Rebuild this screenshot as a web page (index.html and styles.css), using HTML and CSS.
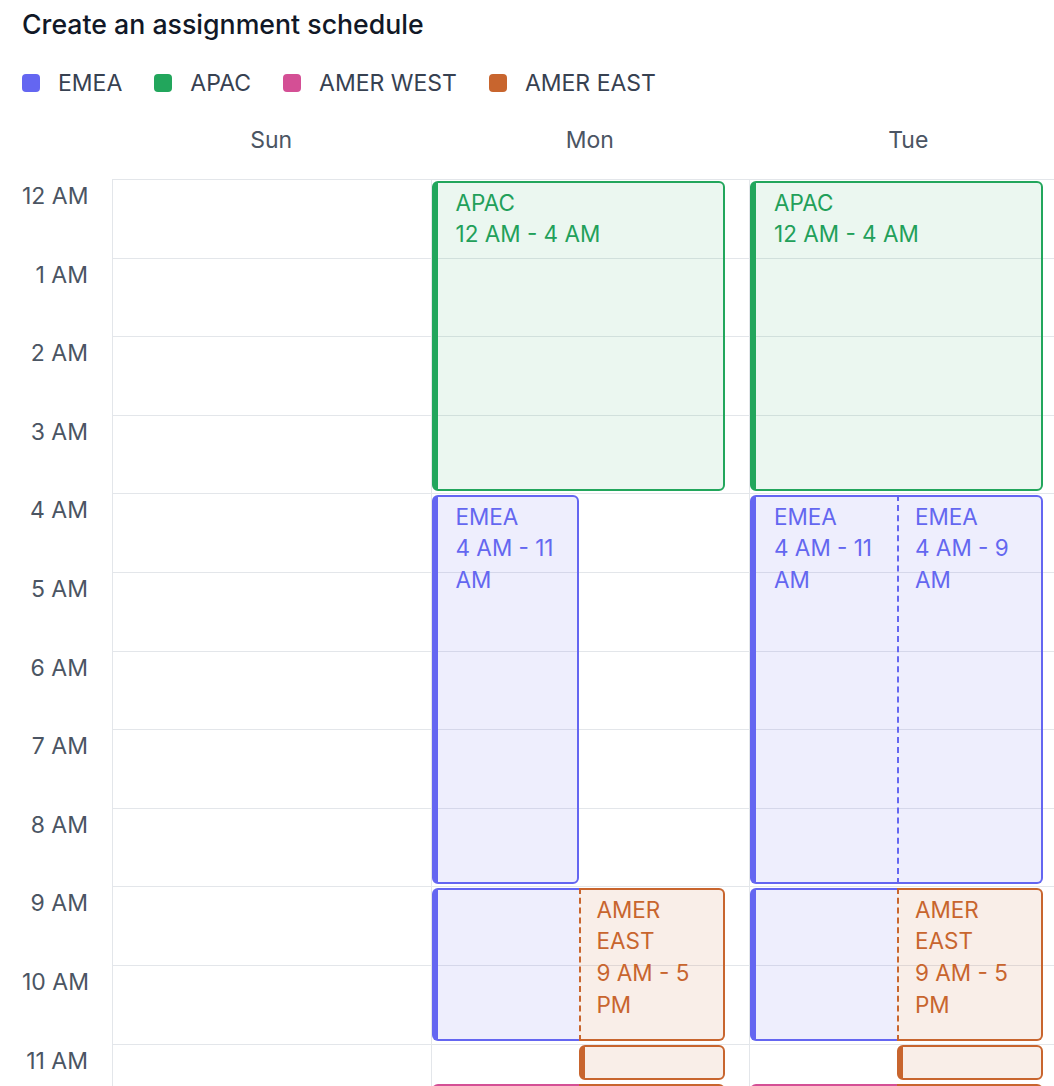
FILE: index.html
```html
<!DOCTYPE html>
<html lang="en">
<head>
<meta charset="utf-8">
<title>Create an assignment schedule</title>
<link rel="stylesheet" href="styles.css">
</head>
<body>
<div class="page">
  <h1 class="title">Create an assignment schedule</h1>
  <ul class="legend">
    <li><span class="sw emea"></span>EMEA</li>
    <li><span class="sw apac"></span>APAC</li>
    <li><span class="sw west"></span>AMER WEST</li>
    <li><span class="sw east"></span>AMER EAST</li>
  </ul>
  <div class="cal-head">
    <div class="gutter"></div>
    <div class="day-name">Sun</div>
    <div class="day-name">Mon</div>
    <div class="day-name">Tue</div>
  </div>
  <div class="cal-body">
    <div class="times">
      <div class="time">12 AM</div>
      <div class="time">1 AM</div>
      <div class="time">2 AM</div>
      <div class="time">3 AM</div>
      <div class="time">4 AM</div>
      <div class="time">5 AM</div>
      <div class="time">6 AM</div>
      <div class="time">7 AM</div>
      <div class="time">8 AM</div>
      <div class="time">9 AM</div>
      <div class="time">10 AM</div>
      <div class="time">11 AM</div>
    </div>
    <div class="grid">
      <div class="day">
        <div class="cell"></div><div class="cell"></div><div class="cell"></div><div class="cell"></div>
        <div class="cell"></div><div class="cell"></div><div class="cell"></div><div class="cell"></div>
        <div class="cell"></div><div class="cell"></div><div class="cell"></div><div class="cell"></div>
      </div>
      <div class="day">
        <div class="cell"></div><div class="cell"></div><div class="cell"></div><div class="cell"></div>
        <div class="cell"></div><div class="cell"></div><div class="cell"></div><div class="cell"></div>
        <div class="cell"></div><div class="cell"></div><div class="cell"></div><div class="cell"></div>
        <div class="slot" style="--s:0;--d:4">
          <div class="seg whole apac first last"><div>APAC</div><div>12 AM - 4 AM</div></div>
        </div>
        <div class="slot" style="--s:4;--d:5">
          <div class="seg half emea first last"><div>EMEA</div><div>4 AM - 11 AM</div></div>
        </div>
        <div class="slot" style="--s:9;--d:2">
          <div class="seg half emea first"></div>
          <div class="seg rest east last split"><div>AMER EAST</div><div>9 AM - 5 PM</div></div>
        </div>
        <div class="slot" style="--s:11;--d:0.5">
          <div class="gap"></div>
          <div class="seg rest east first last"></div>
        </div>
        <div class="slot" style="--s:11.5;--d:2">
          <div class="seg half west first"></div>
          <div class="seg rest east last split"></div>
        </div>
      </div>
      <div class="day">
        <div class="cell"></div><div class="cell"></div><div class="cell"></div><div class="cell"></div>
        <div class="cell"></div><div class="cell"></div><div class="cell"></div><div class="cell"></div>
        <div class="cell"></div><div class="cell"></div><div class="cell"></div><div class="cell"></div>
        <div class="slot" style="--s:0;--d:4">
          <div class="seg whole apac first last"><div>APAC</div><div>12 AM - 4 AM</div></div>
        </div>
        <div class="slot" style="--s:4;--d:5">
          <div class="seg half emea first"><div>EMEA</div><div>4 AM - 11 AM</div></div>
          <div class="seg rest emea last split"><div>EMEA</div><div>4 AM - 9 AM</div></div>
        </div>
        <div class="slot" style="--s:9;--d:2">
          <div class="seg half emea first"></div>
          <div class="seg rest east last split"><div>AMER EAST</div><div>9 AM - 5 PM</div></div>
        </div>
        <div class="slot" style="--s:11;--d:0.5">
          <div class="gap"></div>
          <div class="seg rest east first last"></div>
        </div>
        <div class="slot" style="--s:11.5;--d:2">
          <div class="seg half west first"></div>
          <div class="seg rest east last split"></div>
        </div>
      </div>
    </div>
  </div>
</div>
</body>
</html>
```
FILE: styles.css
```css
* { box-sizing: border-box; }
html, body { margin: 0; padding: 0; background: #fff; overflow: hidden; }
body { font-family: Inter, "Noto Sans", sans-serif; color: #374151; }

.page { width: 1054px; height: 1086px; overflow: hidden; padding: 10px 0 0 22px; }

.title { margin: 0; font-size: 26.7px; line-height: 28px; font-weight: 500; color: #111827; }

.legend { list-style: none; margin: 35px 0 0; padding: 0; display: flex; gap: 32px;
  font-size: 23px; line-height: 20px; color: #374151; }
.legend li { display: flex; align-items: center; gap: 18px; }
.sw { width: 18px; height: 18px; border-radius: 4px; flex: none; }
.sw.emea { background: #6466f1; }
.sw.apac { background: #22a65c; }
.sw.west { background: #d44f95; }
.sw.east { background: #c8652e; }

.cal-head { display: flex; margin-top: 35px; }
.gutter { width: 90px; flex: none; }
.day-name { width: 318.5px; flex: none; text-align: center; font-size: 23px; line-height: 24px; color: #4b5563; }

.cal-body { display: flex; margin-top: 27px; }
.times { width: 90px; flex: none; }
.time { height: 78.6px; padding: 5px 24px 0 0; text-align: right; font-size: 23px; line-height: 24px; color: #4b5563; white-space: nowrap; }

.grid { display: flex; }
.day { position: relative; width: 318.5px; flex: none; border-left: 1px solid #e3e6ea; }
.cell { height: 78.6px; border-top: 1px solid #e3e6ea; }

.slot { position: absolute; left: 0; width: 293px;
  top: calc(var(--s) * 78.6px + 1.5px); height: calc(var(--d) * 78.6px - 4px);
  display: flex; }

.gap { flex: 0 0 147px; }
.seg { min-width: 0; font-size: 22.5px; line-height: 31.6px;
  padding: 4px 10px 0 18px; border: 2px solid transparent; overflow: hidden; }
.seg.whole { flex: 1 1 auto; }
.seg.half { flex: 0 0 147px; }
.seg.rest { flex: 1 1 auto; }
.seg:not(.first) { border-left: 0; }
.seg:not(.last) { border-right: 0; }
.seg.first { border-left-width: 6px; border-top-left-radius: 6px; border-bottom-left-radius: 6px; }
.seg.last { border-top-right-radius: 6px; border-bottom-right-radius: 6px; }
.seg.split { border-left: 2px dashed; padding-left: 16px; }

.seg.apac { color: #22a05a; border-color: #22a65c; background: rgba(34, 166, 92, 0.09); }
.seg.emea { color: #6467f0; border-color: #6466f1; background: rgba(100, 102, 241, 0.11); }
.seg.east { color: #c8652e; border-color: #c8652e; background: rgba(200, 101, 46, 0.11); }
.seg.west { color: #d44f95; border-color: #d44f95; background: rgba(212, 79, 149, 0.10); }
```
